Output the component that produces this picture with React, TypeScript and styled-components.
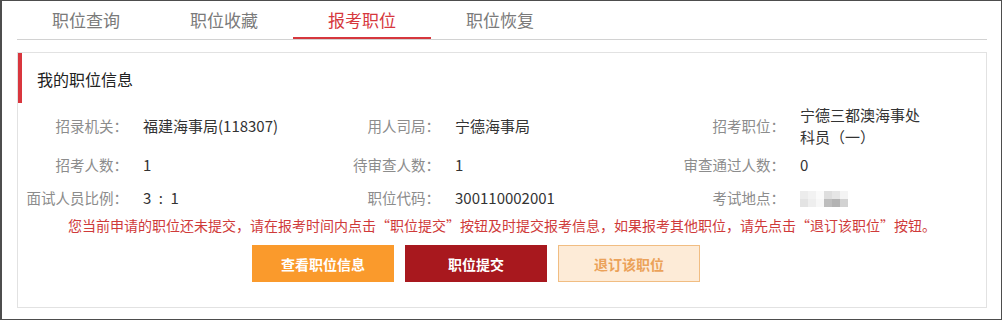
import React from 'react'
import styled, { createGlobalStyle } from 'styled-components'

const GlobalStyle = createGlobalStyle`
  html, body {
    margin: 0;
    padding: 0;
    background: #ffffff;
  }
  body {
    font-family: "Noto Sans CJK SC", "Noto Sans", sans-serif;
  }
  * {
    box-sizing: border-box;
  }
`

const tabs = ['职位查询', '职位收藏', '报考职位', '职位恢复']

const rows = [
  [
    { label: '招录机关：', value: '福建海事局(118307)' },
    { label: '用人司局：', value: '宁德海事局' },
    { label: '招考职位：', value: '宁德三都澳海事处科员（一）' },
  ],
  [
    { label: '招考人数：', value: '1' },
    { label: '待审查人数：', value: '1' },
    { label: '审查通过人数：', value: '0' },
  ],
  [
    { label: '面试人员比例：', value: '3\u2002:\u20021' },
    { label: '职位代码：', value: '300110002001' },
    { label: '考试地点：', value: null },
  ],
]

// mosaic over the blurred-out exam location
const mosaic = [
  '#ececec', '#f2f2f2', '#fafafa', '#dedede', '#e6e6e6', '#f4f4f4',
  '#e3e3e3', '#eeeeee', '#f7f7f7', '#bdbdbd', '#b3b3b3', '#d2d2d2',
]

const App = () => {
  return (
    <>
      <GlobalStyle />
      <Frame>
        <TabBar>
          {tabs.map((t, i) => (
            <Tab key={t} $active={i === 2}>
              {t}
            </Tab>
          ))}
        </TabBar>
        <Panel>
          <PanelHeader>我的职位信息</PanelHeader>
          <InfoGrid>
            {rows.map((row) =>
              row.map((cell, ci) => (
                <React.Fragment key={cell.label}>
                  <Label>{cell.label}</Label>
                  <Value $narrow={ci === 2}>
                    {cell.value ?? (
                      <Mosaic>
                        {mosaic.map((c, k) => (
                          <MosaicCell key={k} style={{ background: c }} />
                        ))}
                      </Mosaic>
                    )}
                  </Value>
                </React.Fragment>
              ))
            )}
          </InfoGrid>
          <Notice>
            您当前申请的职位还未提交，请在报考时间内点击“职位提交”按钮及时提交报考信息，如果报考其他职位，请先点击“退订该职位”按钮。
          </Notice>
          <ButtonRow>
            <Button $variant='view'>查看职位信息</Button>
            <Button $variant='submit'>职位提交</Button>
            <Button $variant='cancel'>退订该职位</Button>
          </ButtonRow>
        </Panel>
      </Frame>
    </>
  )
}

const Frame = styled.div`
  width: 1002px;
  height: 320px;
  border: 1px solid #4d4d4d;
  border-left-width: 2px;
  padding: 0 14px 0 15px;
  background: #ffffff;
  overflow: hidden;
`

const TabBar = styled.div`
  display: flex;
  height: 39px;
  border-bottom: 1px solid #d2d2d2;
`

const Tab = styled.div<{ $active?: boolean }>`
  width: 138px;
  height: 38px;
  padding-bottom: 1px;
  display: flex;
  align-items: center;
  justify-content: center;
  font-size: 17px;
  color: ${(p) => (p.$active ? '#d6373d' : '#7a7a7a')};
  box-shadow: ${(p) => (p.$active ? 'inset 0 -2px 0 #d6373d' : 'none')};
`

const Panel = styled.div`
  margin-top: 12px;
  border: 1px solid #e2e2e2;
  padding-bottom: 25px;
`

const PanelHeader = styled.div`
  height: 50px;
  line-height: 47px;
  padding-top: 3px;
  border-left: 4px solid #d9363e;
  padding-left: 15px;
  font-size: 16px;
  color: #222222;
`

const InfoGrid = styled.div`
  display: grid;
  grid-template-columns: 113px 200px 112px 220px 125px 1fr;
  grid-template-rows: 46px 31px 36px;
  align-items: center;
  line-height: 22px;
`

const Label = styled.div`
  padding-right: 3px;
  text-align: right;
  font-size: 14.5px;
  color: #8c8c8c;
  white-space: nowrap;
`

const Value = styled.div<{ $narrow?: boolean }>`
  padding-left: 12px;
  font-size: 15px;
  color: #333333;
  white-space: pre-wrap;
  max-width: ${(p) => (p.$narrow ? '142px' : 'none')};
`

const Mosaic = styled.span`
  display: grid;
  grid-template-columns: repeat(6, 8px);
  grid-template-rows: repeat(2, 8px);
  width: 48px;
  margin-top: 1px;
`

const MosaicCell = styled.span`
  display: block;
`

const Notice = styled.div`
  height: 18px;
  line-height: 18px;
  text-align: center;
  font-size: 14px;
  color: #cf3a3a;
  white-space: nowrap;
`

const ButtonRow = styled.div`
  display: flex;
  gap: 11px;
  margin-top: 11px;
  padding-left: 234px;
`

const variants = {
  view: { bg: '#fa9a2c', border: '#fa9a2c', color: '#ffffff' },
  submit: { bg: '#a8181e', border: '#a8181e', color: '#ffffff' },
  cancel: { bg: '#fdebd7', border: '#f1bd82', color: '#eba25a' },
}

const Button = styled.div<{ $variant: keyof typeof variants }>`
  width: 142px;
  height: 37px;
  display: flex;
  align-items: center;
  justify-content: center;
  font-size: 14px;
  font-weight: bold;
  background: ${(p) => variants[p.$variant].bg};
  border: 1px solid ${(p) => variants[p.$variant].border};
  color: ${(p) => variants[p.$variant].color};
  cursor: pointer;
`

export default App
